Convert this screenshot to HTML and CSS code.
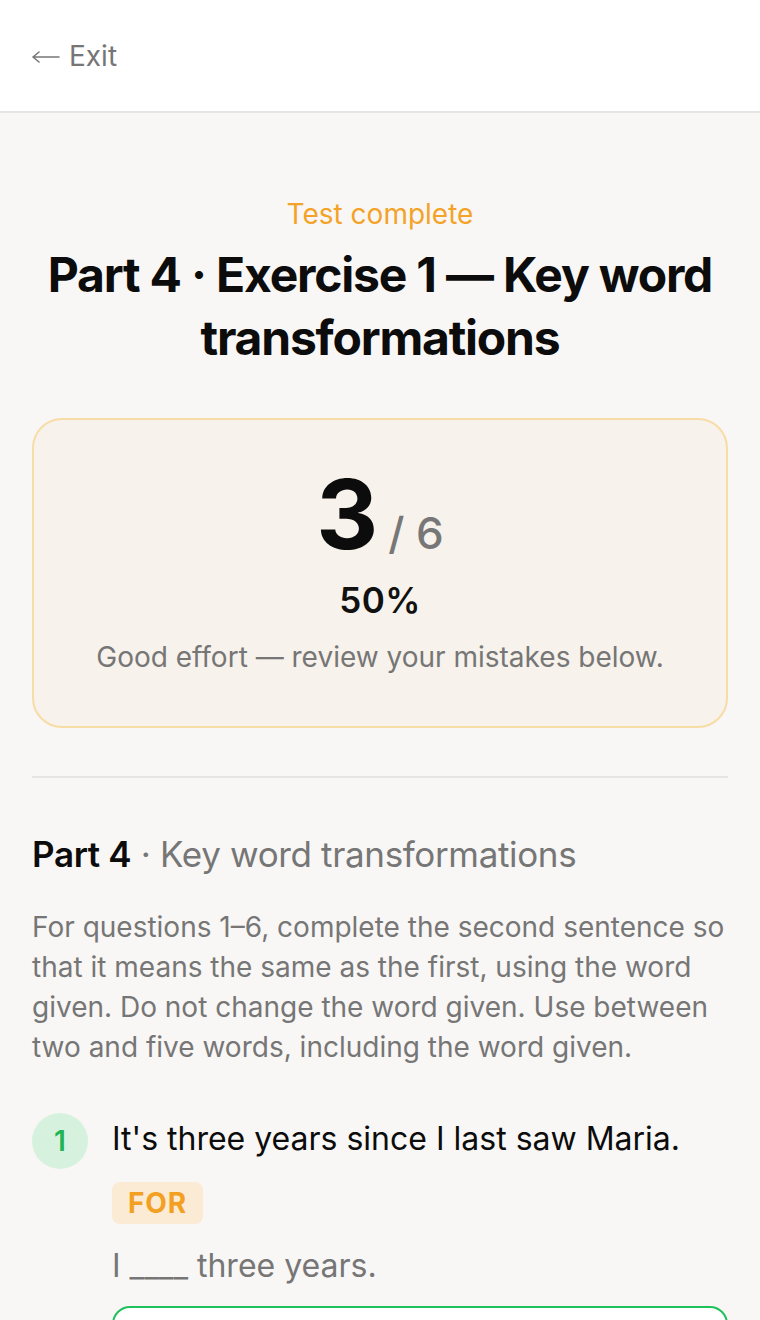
FILE: index.html
```html
<!DOCTYPE html>
<html lang="en">
<head>
<meta charset="utf-8">
<title>Test complete</title>
<link rel="stylesheet" href="styles.css">
</head>
<body>
<header class="topbar">
  <a class="exit" href="#"><svg class="exit-arrow" width="28" height="14" viewBox="0 0 28 14" aria-hidden="true"><path d="M1 7H27M1 7L7 2M1 7L7 12" fill="none" stroke="#777" stroke-width="1.6" stroke-linecap="round" stroke-linejoin="round"/></svg><span>Exit</span></a>
</header>
<main class="content">
  <section class="hero">
    <div class="eyebrow">Test complete</div>
    <h1 class="title">Part 4 · Exercise 1 — Key word transformations</h1>
  </section>
  <section class="score-card">
    <div class="score"><span class="score-num">3</span><span class="score-total">/ 6</span></div>
    <div class="percent">50%</div>
    <p class="feedback">Good effort — review your mistakes below.</p>
  </section>
  <hr class="divider">
  <section class="part">
    <h2 class="part-title"><strong>Part 4</strong> · Key word transformations</h2>
    <p class="instructions">For questions 1–6, complete the second sentence so that it means the same as the first, using the word given. Do not change the word given. Use between two and five words, including the word given.</p>
    <div class="question">
      <div class="qnum">1</div>
      <div class="qbody">
        <p class="qtext">It's three years since I last saw Maria.</p>
        <span class="keyword">FOR</span>
        <p class="qprompt">I ____ three years.</p>
        <div class="answer-box"></div>
      </div>
    </div>
  </section>
</main>
</body>
</html>
```
FILE: styles.css
```css
* { box-sizing: border-box; }
html, body { margin: 0; padding: 0; }
body {
  font-family: Inter, "Noto Sans", "Liberation Sans", sans-serif;
  background: #f9f7f5;
  color: #111;
}
.topbar {
  height: 113px;
  background: #fff;
  border-bottom: 2px solid #e7e5e2;
  display: flex;
  align-items: center;
  padding: 0 32px;
}
.exit {
  display: flex;
  align-items: center;
  gap: 9px;
  font-size: 28px;
  color: #767676;
  text-decoration: none;
}
.exit-arrow { display: block; margin-top: 2px; }
.content {
  padding: 84px 32px 0;
}
.hero { text-align: center; }
.eyebrow {
  color: #f3a328;
  font-size: 28px;
  line-height: 34px;
}
.title {
  margin: 12px 0 0;
  font-size: 48px;
  line-height: 63px;
  font-weight: 700;
  letter-spacing: -0.025em;
  color: #0c0c0c;
}
.score-card {
  margin-top: 49px;
  background: #f7f2eb;
  border: 2px solid #f7dca6;
  border-radius: 30px;
  text-align: center;
  padding: 44px 20px 52px;
}
.score {
  display: flex;
  justify-content: center;
  align-items: baseline;
  gap: 10px;
}
.score-num {
  font-size: 96px;
  font-weight: 700;
  line-height: 100px;
  color: #0c0c0c;
}
.score-total {
  font-size: 44px;
  font-weight: 500;
  color: #777;
}
.percent {
  margin-top: 14px;
  font-size: 35px;
  font-weight: 600;
  line-height: 44px;
  letter-spacing: 0.01em;
}
.feedback {
  margin: 18px 0 0;
  font-size: 28px;
  line-height: 34px;
  color: #767676;
}
.divider {
  margin: 48px 0 0;
  border: 0;
  border-top: 2px solid #e7e5e2;
}
.part { padding-top: 54px; }
.part-title {
  margin: 0;
  font-size: 35px;
  line-height: 44px;
  font-weight: 400;
  color: #767676;
  letter-spacing: -0.01em;
}
.part-title strong { color: #0c0c0c; font-weight: 600; }
.instructions {
  margin: 31px 0 0;
  font-size: 28px;
  line-height: 40px;
  color: #767676;
}
.question {
  margin-top: 46px;
  display: flex;
  gap: 24px;
}
.qnum {
  flex: 0 0 56px;
  width: 56px;
  height: 56px;
  border-radius: 50%;
  background: #d6f2df;
  color: #1fb556;
  font-weight: 600;
  font-size: 28px;
  display: flex;
  align-items: center;
  justify-content: center;
}
.qbody { flex: 1; }
.qtext {
  margin: 6px 0 0;
  font-size: 32px;
  line-height: 40px;
  color: #0c0c0c;
}
.keyword {
  display: inline-block;
  margin-top: 23px;
  padding: 0 16px;
  height: 42px;
  line-height: 42px;
  border-radius: 8px;
  background: #fbebd4;
  color: #f3a022;
  font-weight: 700;
  font-size: 28px;
  letter-spacing: 0.03em;
}
.qprompt {
  margin: 20px 0 0;
  font-size: 32px;
  line-height: 44px;
  color: #767676;
}
.answer-box {
  margin-top: 18px;
  height: 80px;
  border: 2px solid #1ec15a;
  border-radius: 18px;
  background: #fff;
}
```
